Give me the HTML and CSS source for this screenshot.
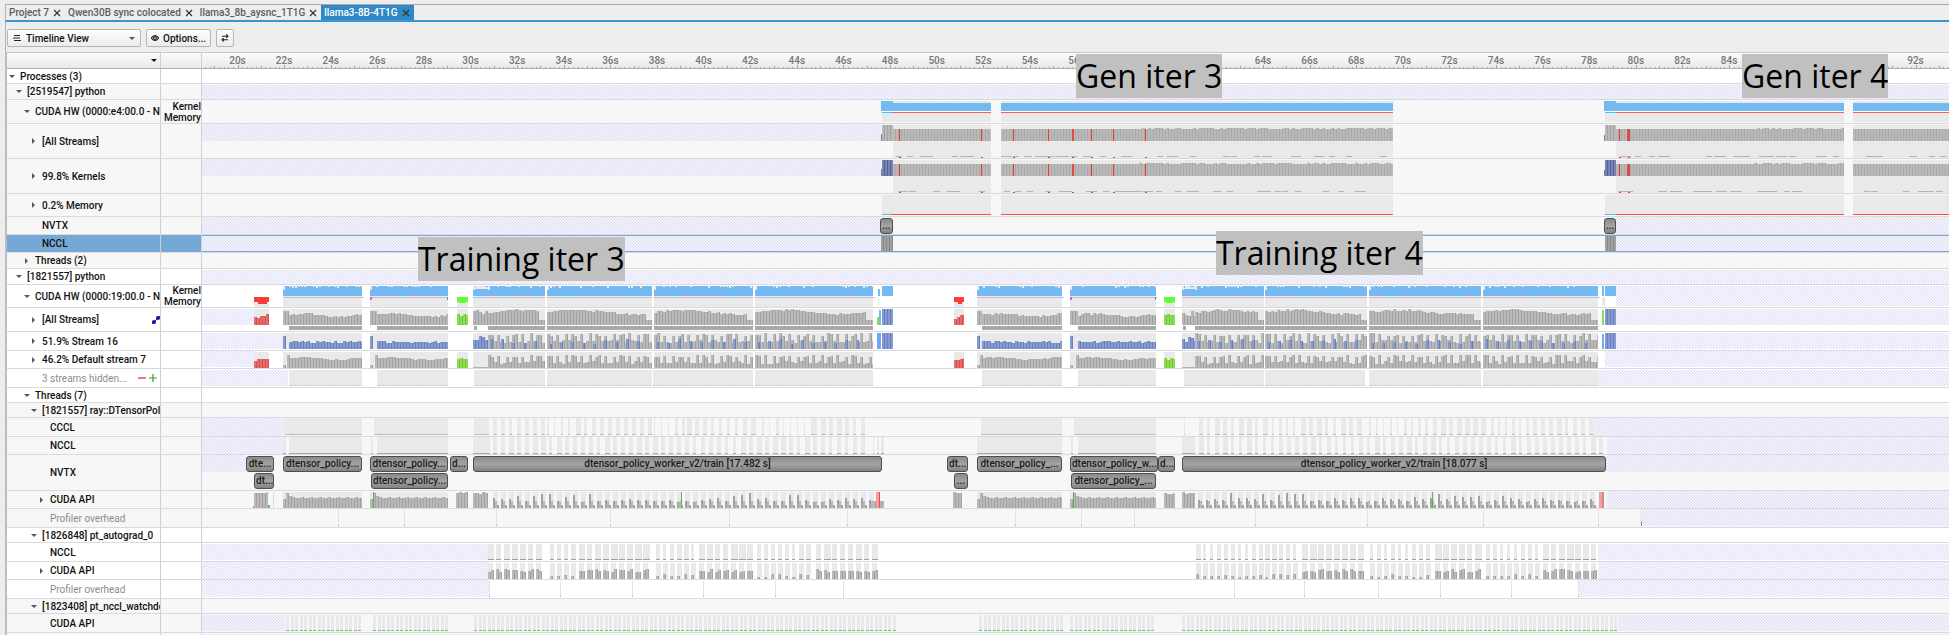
FILE: index.html
```html
<!DOCTYPE html>
<html lang="en">
<head>
<meta charset="utf-8">
<meta name="viewport" content="width=device-width, initial-scale=1">
<title>llama3-8B-4T1G</title>
<link rel="stylesheet" href="styles.css">
</head>
<body>
<svg class="defs" aria-hidden="true">
  <defs>
    <pattern id="hatch" width="3" height="3" patternUnits="userSpaceOnUse">
      <rect width="3" height="3" class="hatch-base"/>
      <rect width="1.5" height="1.5" class="hatch-dot"/>
      <rect x="1.5" y="1.5" width="1.5" height="1.5" class="hatch-dot"/>
    </pattern>
  </defs>
</svg>
<div class="app">
  <nav class="tabs" aria-label="Reports">
    <div class="tab"><a href="#p7">Project 7</a><button class="close" aria-label="Close Project 7"><svg viewBox="0 0 8 8"><path d="M1 1l6 6M7 1l-6 6"/></svg></button></div>
    <div class="tab"><a href="#qwen">Qwen30B sync colocated</a><button class="close" aria-label="Close Qwen30B"><svg viewBox="0 0 8 8"><path d="M1 1l6 6M7 1l-6 6"/></svg></button></div>
    <div class="tab"><a href="#async">llama3_8b_aysnc_1T1G</a><button class="close" aria-label="Close llama3_8b"><svg viewBox="0 0 8 8"><path d="M1 1l6 6M7 1l-6 6"/></svg></button></div>
    <div class="tab tab-active"><a href="#cur" aria-current="page">llama3-8B-4T1G</a><button class="close" aria-label="Close llama3-8B-4T1G"><svg viewBox="0 0 8 8"><path d="M1 1l6 6M7 1l-6 6"/></svg></button></div>
  </nav>
  <div class="toolbar">
    <div class="view-picker">
      <svg class="icon" viewBox="0 0 8 8"><path d="M1 1.5h6M0 4h7M1 6.5h7"/></svg>
      <select aria-label="View"><option>Timeline View</option></select>
      <span class="caret"></span>
    </div>
    <button class="btn"><svg class="icon" viewBox="0 0 8 8"><path d="M0.4 4Q4 -0.8 7.6 4Q4 8.8 0.4 4Z"/><circle cx="4" cy="4" r="1.4"/></svg>Options...</button>
    <button class="btn btn-swap" aria-label="Swap"><svg class="icon" viewBox="0 0 8 8"><path d="M1 2.2h6M5.2 0.5L7 2.2L5.2 3.9M7 5.8H1M2.8 4.1L1 5.8L2.8 7.5"/></svg></button>
  </div>
  <main class="timeline">
    <div class="row head">
      <div class="name"><span class="caret caret-dark"></span></div><div class="sub"></div><div class="lane" id="ruler"></div>
    </div>
    <div class="row h15 white"><div class="name l0"><button class="tog open" aria-label="Toggle"></button><span>Processes (3)</span></div><div class="sub"></div><div class="lane"></div></div>
    <div class="row h16"><div class="name l1"><button class="tog open" aria-label="Toggle"></button><span>[2519547] python</span></div><div class="sub"></div><div class="lane" data-lane="full"></div></div>
    <div class="row h24"><div class="name l2"><button class="tog open" aria-label="Toggle"></button><span>CUDA HW (0000:e4:00.0 - NV</span></div><div class="sub">Kernel<br>Memory</div><div class="lane" data-lane="genHw"></div></div>
    <div class="row h35"><div class="name l3"><button class="tog" aria-label="Toggle"></button><span>[All Streams]</span></div><div class="sub"></div><div class="lane" data-lane="genAll"></div></div>
    <div class="row h35"><div class="name l3"><button class="tog" aria-label="Toggle"></button><span>99.8% Kernels</span></div><div class="sub"></div><div class="lane" data-lane="genKernels"></div></div>
    <div class="row h23"><div class="name l3"><button class="tog" aria-label="Toggle"></button><span>0.2% Memory</span></div><div class="sub"></div><div class="lane" data-lane="genMemory"></div></div>
    <div class="row h18"><div class="name l3 leaf"><span>NVTX</span></div><div class="sub"></div><div class="lane" data-lane="genNvtx"></div></div>
    <div class="row h18 selected"><div class="name l3 leaf"><span>NCCL</span></div><div class="sub"></div><div class="lane" data-lane="genNccl"></div></div>
    <div class="row h16"><div class="name l2"><button class="tog" aria-label="Toggle"></button><span>Threads (2)</span></div><div class="sub"></div><div class="lane"></div></div>
    <div class="row h16 white"><div class="name l1"><button class="tog open" aria-label="Toggle"></button><span>[1821557] python</span></div><div class="sub"></div><div class="lane" data-lane="full"></div></div>
    <div class="row h23 white"><div class="name l2"><button class="tog open" aria-label="Toggle"></button><span>CUDA HW (0000:19:00.0 - NV</span></div><div class="sub">Kernel<br>Memory</div><div class="lane" data-lane="trainHw"></div></div>
    <div class="row h24 white"><div class="name l3"><button class="tog" aria-label="Toggle"></button><span>[All Streams]</span><svg class="link" viewBox="0 0 8 8"><path d="M1.5 6.5L6.5 1.5"/><circle cx="1.8" cy="6.2" r="1.7"/><circle cx="6.2" cy="1.8" r="1.7"/></svg></div><div class="sub"></div><div class="lane" data-lane="trainAll"></div></div>
    <div class="row h19 white"><div class="name l3"><button class="tog" aria-label="Toggle"></button><span>51.9% Stream 16</span></div><div class="sub"></div><div class="lane" data-lane="stream16"></div></div>
    <div class="row h18 white"><div class="name l3"><button class="tog" aria-label="Toggle"></button><span>46.2% Default stream 7</span></div><div class="sub"></div><div class="lane" data-lane="stream7"></div></div>
    <div class="row h19 white"><div class="name l3 leaf muted"><span>3 streams hidden...</span><button class="pm" aria-label="Fewer"><svg viewBox="0 0 8 8"><path class="minus" d="M0 4h8"/></svg></button><button class="pm" aria-label="More"><svg viewBox="0 0 8 8"><path class="plus" d="M0 4h8M4 0v8"/></svg></button></div><div class="sub"></div><div class="lane" data-lane="hidden"></div></div>
    <div class="row h15 white"><div class="name l2"><button class="tog open" aria-label="Toggle"></button><span>Threads (7)</span></div><div class="sub"></div><div class="lane"></div></div>
    <div class="row h15"><div class="name l3"><button class="tog open" aria-label="Toggle"></button><span>[1821557] ray::DTensorPol</span></div><div class="sub"></div><div class="lane"></div></div>
    <div class="row h19"><div class="name l4 leaf"><span>CCCL</span></div><div class="sub"></div><div class="lane" data-lane="cccl"></div></div>
    <div class="row h18"><div class="name l4 leaf"><span>NCCL</span></div><div class="sub"></div><div class="lane" data-lane="nccl"></div></div>
    <div class="row h36"><div class="name l4 leaf"><span>NVTX</span></div><div class="sub"></div><div class="lane" data-lane="nvtx"></div></div>
    <div class="row h18"><div class="name l4"><button class="tog" aria-label="Toggle"></button><span>CUDA API</span></div><div class="sub"></div><div class="lane" data-lane="api"></div></div>
    <div class="row h19"><div class="name l4 leaf muted"><span>Profiler overhead</span></div><div class="sub"></div><div class="lane" data-lane="overhead"></div></div>
    <div class="row h15 white"><div class="name l3"><button class="tog open" aria-label="Toggle"></button><span>[1826848] pt_autograd_0</span></div><div class="sub"></div><div class="lane"></div></div>
    <div class="row h19 white"><div class="name l4 leaf"><span>NCCL</span></div><div class="sub"></div><div class="lane" data-lane="gradNccl"></div></div>
    <div class="row h18 white"><div class="name l4"><button class="tog" aria-label="Toggle"></button><span>CUDA API</span></div><div class="sub"></div><div class="lane" data-lane="gradApi"></div></div>
    <div class="row h19 white"><div class="name l4 leaf muted"><span>Profiler overhead</span></div><div class="sub"></div><div class="lane" data-lane="gradOverhead"></div></div>
    <div class="row h15"><div class="name l3"><button class="tog open" aria-label="Toggle"></button><span>[1823408] pt_nccl_watchdog</span></div><div class="sub"></div><div class="lane"></div></div>
    <div class="row h19"><div class="name l4 leaf"><span>CUDA API</span></div><div class="sub"></div><div class="lane" data-lane="watchApi"></div></div>
    <div class="row rest"><div class="name"></div><div class="sub"></div><div class="lane" data-lane="full"></div></div>
    <div class="notes" id="notes"></div>
  </main>
</div>
<script src="timeline.js"></script>
</body>
</html>
```

FILE: styles.css
```css
* { box-sizing: border-box; }
body {
  margin: 0;
  min-height: 100vh;
  background: #ededed;
  color: #111;
  font: 500 10px/11px Roboto, "Liberation Sans", sans-serif;
}
button, select { font: inherit; color: inherit; }
.defs { position: absolute; width: 0; height: 0; }
.hatch-base { fill: #ffffff; fill-opacity: 0.4; }
.hatch-dot { fill: #dcdcf8; shape-rendering: geometricPrecision; }

.app {
  display: flex;
  flex-direction: column;
  min-height: 100vh;
  padding: 4px 0 0 5px;
  overflow: hidden;
}

.tabs {
  display: flex;
  height: 18px;
  border-top: 1px solid #a8a8a8;
  border-left: 1px solid #b4b4b4;
  border-bottom: 2px solid #3a96d2;
}
.tab {
  display: flex;
  align-items: center;
  gap: 4px;
  padding: 0 4px 0 3px;
  color: #5c5c5c;
}
.tab-active { background: #2f89c5; color: #fff; }
.tab a { color: inherit; text-decoration: none; }
.close { width: 8px; height: 8px; padding: 0; border: 0; background: none; }
.close svg { display: block; width: 8px; height: 8px; fill: none; stroke: #333; stroke-width: 1.2; }

.toolbar {
  display: flex;
  gap: 5px;
  height: 30px;
  padding: 7px 1px 5px;
  border-left: 1px solid #b4b4b4;
}
.view-picker, .btn {
  display: flex;
  align-items: center;
  gap: 5px;
  border: 1px solid #b6b6b6;
  border-radius: 2px;
  background: linear-gradient(#fdfdfd, #ececec);
}
.view-picker { width: 134px; padding: 0 5px; }
.view-picker select {
  flex: 1;
  padding: 0;
  border: 0;
  background: none;
  appearance: none;
}
.btn { gap: 4px; padding: 0 4px; }
.btn-swap { width: 18px; justify-content: center; }
.icon { width: 8px; height: 8px; flex: none; fill: none; stroke: #222; stroke-width: 1.1; }
.caret {
  width: 0;
  border: 3px solid transparent;
  border-top-color: #555;
  border-bottom: 0;
}
.caret-dark { border-top-color: #111; margin: 0 3px 0 auto; }

.timeline {
  position: relative;
  flex: 1;
  display: flex;
  flex-direction: column;
  border-left: 2px solid #bcbcbc;
}
.row {
  display: flex;
  flex: none;
  background: #f7f7f7;
  border-bottom: 1px solid #dadada;
}
.head {
  height: 17px;
  background: linear-gradient(#fbfbfb, #e9e9e9);
  border-top: 1px solid #c8c8c8;
  border-bottom: 1px solid #b0b0b0;
}
.white { background: #fff; }
.h15 { height: 15px; }
.h16 { height: 16px; }
.h18 { height: 18px; }
.h19 { height: 19px; }
.h23 { height: 23px; }
.h24 { height: 24px; }
.h35 { height: 35px; }
.h36 { height: 36px; }
.rest { flex: 1 0 2px; border-bottom: 0; }

.name {
  display: flex;
  align-items: center;
  flex: none;
  width: 154px;
  border-right: 1px solid #d0d0d0;
  overflow: hidden;
  white-space: nowrap;
}
.name span { flex: none; }
.l0 { padding-left: 1px; }
.l1 { padding-left: 8px; }
.l2 { padding-left: 16px; }
.l3 { padding-left: 23px; }
.l4 { padding-left: 31px; }
.leaf::before { content: ""; flex: none; width: 12px; }
.muted { color: #8c8c8c; font-weight: 400; }
.tog {
  display: flex;
  align-items: center;
  justify-content: center;
  flex: none;
  width: 7px;
  height: 9px;
  margin-right: 5px;
  padding: 0;
  border: 0;
  background: none;
}
.tog::before {
  content: "";
  border: 3px solid transparent;
  border-left-color: #555;
  border-right: 0;
}
.tog.open::before {
  border: 3px solid transparent;
  border-top-color: #555;
  border-bottom: 0;
}
.link {
  width: 8px;
  height: 8px;
  margin-left: auto;
  fill: #1c1c96;
  stroke: #1c1c96;
  stroke-width: 1;
}
.pm { width: 8px; height: 8px; padding: 0; border: 0; margin-right: 3px; background: none; }
.name span + .pm { margin-left: auto; }
.pm svg { display: block; width: 8px; height: 8px; fill: none; stroke-width: 1.2; }
.minus { stroke: #e02020; }
.plus { stroke: #2ca02c; }

.sub {
  flex: none;
  display: flex;
  align-items: center;
  justify-content: flex-end;
  width: 41px;
  border-right: 1px solid #d0d0d0;
  text-align: right;
}
.selected .name, .selected .sub { background: #74a9d5; }
.selected .lane { box-shadow: inset 0 1px #74a9d5, inset 0 -1px #74a9d5; }

.lane {
  position: relative;
  flex: 1;
  min-width: 0;
  overflow: hidden;
}
.lane svg { display: block; width: 100%; height: 100%; shape-rendering: crispEdges; }

.tick {
  position: absolute;
  top: 2px;
  width: 40px;
  margin-left: -20px;
  color: #777;
  text-align: center;
}

.range {
  position: absolute;
  top: 1px;
  height: 16px;
  padding: 0 1px;
  border: 1px solid #4e4e4e;
  border-radius: 3px;
  background: linear-gradient(#8a8a8a, #a4a4a4 50%, #828282);
  color: #1a1a1a;
  line-height: 14px;
  text-align: center;
  white-space: nowrap;
  overflow: hidden;
}
.range-child { top: 18px; }

.notes { position: absolute; inset: 0 0 0 195px; pointer-events: none; }
.note {
  position: absolute;
  background: #c0c0c0;
  color: #000;
  font: 500 32px/44px "Open Sans", "Noto Sans", sans-serif;
  white-space: nowrap;
}
```

FILE: timeline.js
```js
// Horizontal coordinates run from START to END and scale with the lane width.
const START = 202, END = 1949, SPAN = END - START;
const pct = (v) => (v / SPAN * 100).toFixed(3) + '%';
const LIGHT = '#e9e9e9', GREY = '#b9b9b9', EDGE = '#a2a2a2';
const BLUE = '#8599d3', BLUE_EDGE = '#6b7fb8', SKY = '#74baf2';
const RED = '#fd3b3b', RED_BAR = '#ea6a6a', GREEN = '#62fb34', GREEN_BAR = '#8ce04c';

let seed = 7;
const rnd = () => (seed = (seed * 1103515245 + 12345) % 2147483648) / 2147483648;

const r = (x, y, x2, h, fill) => `<rect x="${x}" y="${y}" width="${x2 - x}" height="${h}" fill="${fill}"/>`;
const hatch = (x, x2, y, h) => r(x, y, x2, h, 'url(#hatch)');

// Histogram columns standing on `base`, 3 units wide each with a darker edge.
function bars(x, x2, base, height, fill = GREY, edge = EDGE) {
  let out = '';
  for (let i = 0; x < x2; x += 3, i++) {
    const h = Math.max(1, Math.round(typeof height === 'function' ? height(i, x) : height));
    out += r(x, base - h, Math.min(x + 2, x2), h, fill);
    if (x + 2 < x2) out += r(x + 2, base - h, Math.min(x + 3, x2), h, edge);
  }
  return out;
}

// Light columns with a thin foot line.
function stripes(x, x2, pitch, width, y, h, foot) {
  let out = '';
  for (; x < x2; x += pitch) {
    const w = Math.max(1, width + Math.round(rnd() * 2 - 1));
    out += r(x, y, x + w, h, LIGHT) + r(x, y + h - 1, x + w, 1, foot);
  }
  return out;
}

const A = [[283, 362, 289], [977, 1062, 982]];
const B = [[370, 448, 377], [1070, 1156, 1078]];
const C = [[473, 488], [1182, 1195]];
const D = [[488, 545], [547, 652], [654, 753], [755, 873], [1195, 1264], [1265, 1367], [1369, 1481], [1483, 1598]];
const REDS = [[254, 269], [954, 964]];
const GREENS = [[457, 468], [1164, 1175]];
const BOXES = [...A, ...B, ...C, ...D];
const map = (list, fn) => list.map(fn).join('');

const GEN = [[893, 991], [1001, 1393], [1616, 1844], [1853, 1949]];
const GEN_RED = [899, 981, 1013, 1048, 1072, 1091, 1113, 1145, 1619, 1628];

function genBars(first, edge) {
  let s = hatch(202, 881, 0, 17) + r(881, 10, 883, 7, BLUE_EDGE) + r(1604, 11, 1605, 6, BLUE_EDGE);
  s += map(GEN, ([a, b]) => r(a, 1, b, 33, LIGHT)
    + bars(a, b, 17, (i) => 11.6 + rnd() * 0.7 + (i > 45 ? 0.6 : 0), GREY, '#a9a9a9')
    + map(Array.from({ length: Math.floor((b - a) / 9) }), () => {
      const x = Math.round(a + rnd() * (b - a - 8));
      return r(x, 32, x + 6, 1, '#b4b4b4');
    }));
  s += bars(882, 893, 17, 16, first, edge) + bars(1605, 1616, 17, 16, first, edge);
  s += map(GEN_RED, (x) => r(x, 5, x + 1, 12, '#f03a30') + r(x, 33, x + 2, 1, '#f03a30'));
  s += r(1072, 5, 1074, 12, '#e04a40') + r(1627, 5, 1630, 12, '#e04a40');
  return s;
}

const wave = (i) => 12 + 2 * Math.sin(i / 6) + rnd() * 2;
const comb = (i, lo, hi) => ((i * 3) % 8 < 4 ? hi : lo) + rnd() * 3 - 1;

const LANES = {
  full: (h) => hatch(START, END, 1, h),
  genHw: () => map([[882, 991], [1001, 1393], [1605, 1844], [1853, 1949]], ([a, b]) =>
      r(a, 1, b, 21, LIGHT) + r(a, 3, b, 8, SKY) + r(a, 11, b, 1, '#fff') + r(a, 12, b, 1, '#fb6060'))
    + r(881, 1, 893, 10, SKY) + r(1604, 1, 1616, 10, SKY) + r(882, 12, 892, 1, '#3cc8f4') + r(1605, 12, 1616, 1, '#3cc8f4'),
  genAll: () => genBars(GREY, EDGE),
  genKernels: () => genBars('#7684b4', '#56638e'),
  genMemory: () => map([[882, 991], [1001, 1393], [1605, 1844], [1853, 1949]], ([a, b]) =>
      r(a, 1, b, 20, LIGHT) + r(a, 20, b, 1, '#fb4a4a'))
    + r(882, 20, 891, 1, '#3cc8f4') + r(1605, 20, 1616, 1, '#3cc8f4'),
  genNvtx: () => hatch(202, 880, 0, 17) + hatch(1616, END, 0, 17),
  genNccl: () => hatch(202, 881, 1, 15) + hatch(1616, END, 1, 15)
    + bars(881, 893, 16, 15, '#a0a0a0', '#8a8a8a') + bars(1605, 1616, 16, 15, '#a0a0a0', '#8a8a8a'),
  trainHw: () => {
    let s = map(BOXES, ([a, b]) => r(a, 1, b, 21, LIGHT));
    s += map(BOXES, ([a, b]) => {
      let t = r(a, 1, b, 10, SKY);
      for (let x = a; x < b; x += 3) {
        if (rnd() < 0.35) t += r(x, 1, x + 2, rnd() < 0.7 ? 1 : 2, LIGHT);
        t += r(x, 12, x + 3, 1, rnd() < 0.5 ? '#f6a9bd' : rnd() < 0.5 ? '#8fd3ea' : '#d3b0ee');
      }
      return t + r(a, 1, a + 2, 4, LIGHT);
    });
    s += map(C, ([a, b]) => bars(a, b, 4, () => 1 + rnd() * 3, LIGHT, LIGHT));
    s += map(REDS, ([a, b]) => r(a, 12, b, 10, LIGHT) + r(a, 12, b, 5, RED) + r(a + 4, 17, b - 2, 2, RED));
    s += map(GREENS, ([a, b]) => r(a, 12, b, 10, LIGHT) + r(a, 12, b, 5, GREEN) + r(a + 2, 17, b - 2, 1, GREEN));
    s += map([370, 1070], (x) => r(x, 12, x + 2, 3, '#d05cf0')) + map([447, 1155], (x) => r(x, 12, x + 1, 3, '#17b59a'));
    s += r(878, 4, 880, 7, SKY) + r(882, 1, 893, 10, SKY) + r(878, 12, 879, 8, '#d8f2c8');
    s += r(1602, 1, 1604, 10, SKY) + r(1605, 1, 1616, 10, SKY) + r(1602, 12, 1605, 9, LIGHT);
    return s + hatch(1616, END, 1, 20);
  },
  trainAll: () => {
    let s = hatch(202, 254, 1, 16) + hatch(1616, END, 1, 16);
    s += map([...BOXES, ...REDS, ...GREENS], ([a, b]) => r(a, 1, b, 16, LIGHT));
    s += map([...A, ...B], ([a, b, m]) => bars(a, m, 17, 14) + bars(m, b, 17, (i) => 9 + 1.5 * Math.sin(i / 3.5) + rnd() * 2));
    s += map(C, ([a, b]) => bars(a, b, 17, () => 9 + rnd() * 6));
    s += map(D, ([a, b]) => bars(a, b, 17, (i) => (b - a - i * 3 < 8 ? 5 : wave(i))));
    s += map(REDS, ([a, b]) => bars(a, b, 17, (i) => 6 + i * 0.8 + rnd() * 2, RED_BAR, '#cf5252'));
    s += map(GREENS, ([a, b]) => bars(a, b, 17, () => 8 + rnd() * 3, GREEN_BAR, '#74c03c'));
    s += r(877, 9, 879, 8, GREEN_BAR) + r(1602, 2, 1604, 15, GREEN_BAR);
    s += bars(879, 881, 17, 15, SKY) + bars(882, 893, 17, 16, BLUE, BLUE_EDGE) + bars(1605, 1616, 17, 16, BLUE, BLUE_EDGE);
    s += map([...A, ...B], ([, b, m]) => r(m, 18, b, 4, '#a9a9a9')) + map(D, ([a, b]) => r(a, 18, b, 4, '#a9a9a9'));
    return s + map(C, ([a]) => r(a + 1, 18, a + 4, 4, '#a9a9a9'));
  },
  stream16: () => {
    let s = hatch(202, 283, 1, 16) + hatch(1616, END, 1, 16);
    s += map(BOXES, ([a, b]) => r(a, 1, b, 16, LIGHT));
    s += map([...A, ...B], ([a, b, m]) => bars(a, a + 3, 17, 13, BLUE, BLUE_EDGE) + bars(m, b, 17, () => 6 + rnd() * 2.5, BLUE, BLUE_EDGE));
    s += map(C, ([a, b]) => bars(a, b, 17, () => 5 + rnd() * 9, BLUE, BLUE_EDGE));
    s += map(D, ([a, b]) => bars(a, b, 17, (i) => comb(i, 7, 14)) + map(
      Array.from({ length: Math.floor((b - a) / 11) }), (_, i) => bars(a + i * 11 + 2, a + i * 11 + 5, 17, () => 5 + rnd() * 5, BLUE, BLUE_EDGE)));
    return s + r(877, 1, 881, 16, '#6fa8f8') + r(1602, 2, 1604, 15, '#6fa8f8')
      + bars(882, 893, 17, 16, BLUE, BLUE_EDGE) + bars(1605, 1616, 17, 16, BLUE, BLUE_EDGE);
  },
  stream7: () => {
    let s = hatch(202, 254, 0, 16) + hatch(1605, END, 0, 16);
    s += map([...BOXES, ...REDS, ...GREENS], ([a, b]) => r(a, 1, b, 16, LIGHT));
    s += map([...A, ...B], ([a, b, m]) => bars(a, a + 3, 17, 3) + bars(m - 2, b, 17, (i) => (i ? 9 + 1.2 * Math.sin(i / 3.5) + rnd() : 13)));
    s += map(C, ([a, b]) => bars(a, b, 17, 1));
    s += map(D, ([a, b]) => bars(a, b, 17, (i) => comb(i, 5, 11.5)));
    s += map(REDS, ([a, b]) => bars(a, b, 17, (i) => 6 + i * 0.8 + rnd() * 2, RED_BAR, '#cf5252'));
    return s + map(GREENS, ([a, b]) => bars(a, b, 17, () => 8 + rnd() * 3, GREEN_BAR, '#74c03c'));
  },
  hidden: () => hatch(202, 288, 1, 16) + hatch(1598, END, 1, 16)
    + map([[289, 362], [377, 448], [474, 545], [547, 652], [653, 753], [755, 873], [982, 1062], [1078, 1156], [1184, 1264], [1265, 1365], [1369, 1481], [1483, 1598]],
      ([a, b]) => r(a, 1, b, 16, LIGHT) + `<path d="M${a} 16.5H${b}" stroke="#cfc4b8" stroke-dasharray="2 1"/>`),
  cccl: () => hatch(202, 285, 0, 18) + hatch(1592, END, 0, 18)
    + map([[285, 362], [374, 448], [474, 489], [981, 1062], [1074, 1156], [1184, 1185]], ([a, b]) => r(a, 0, b, 17, LIGHT) + r(a, 16, b, 1, '#bcbcbc'))
    + map([[493, 545, 4], [547, 575, 2], [576, 652, 4], [654, 685, 2], [687, 753, 4], [755, 812, 2], [813, 867, 4],
      [1199, 1264, 4], [1265, 1300, 2], [1301, 1365, 4], [1369, 1430, 2], [1433, 1482, 5], [1484, 1530, 2], [1533, 1590, 4]],
      ([a, b, w]) => stripes(a, b, w > 3 ? 8 : 7, w, 0, 17, '#bcbcbc')),
  nccl: () => hatch(202, 283, 0, 17) + hatch(1607, END, 0, 17)
    + map([[283, 286], [289, 362], [371, 373], [377, 448], [473, 490], [873, 874], [877, 879], [881, 884], [977, 1062], [1071, 1073], [1078, 1156], [1182, 1195]],
      ([a, b]) => r(a, 0, b, 17, LIGHT) + r(a, 16, b, 1, '#a6a6a6'))
    + map([[493, 867], [1199, 1604]], ([a, b]) => stripes(a, b, 8, 4, 0, 17, '#a6a6a6')),
  nvtx: () => hatch(202, 246, 0, 17) + hatch(1606, END, 0, 17),
  api: () => {
    let s = hatch(1607, END, 0, 17);
    s += map([...A, ...B], ([a, b]) => r(a, 1, b, 16, LIGHT) + bars(a, b, 17, (i) => [9, 15, 12][i] || 10 + (i % 3 ? 0 : 1)));
    s += map([[254, 268], [456, 468], [473, 488], [953, 962], [1164, 1175], [1182, 1195]], ([a, b]) => bars(a, b, 17, () => 14 + rnd() * 2));
    s += map([[493, 870], [1198, 1596]], ([a, b]) => {
      let t = '';
      for (let x = a, i = 0; x < b; x += 8, i++) {
        const big = Math.sin(i / 4.2) > 0 ? 9 : 4;
        t += r(x, 1, x + 5, 16, LIGHT) + r(x, 17 - 6 - Math.round(rnd() * big), x + 2, 6 + big, EDGE)
          + r(x + 2, 10, x + 4, 7, GREY) + r(x + 4, 14, x + 6, 3, EDGE);
      }
      return t;
    });
    s += r(253, 15, 254, 2, '#f07070') + r(268, 14, 270, 3, '#58c850') + r(273, 1, 274, 16, '#e6d6d6');
    s += map([373, 681, 1073, 1432], (x) => r(x, 1, x + 1, 16, '#58b850'));
    s += bars(873, 884, 17, 7);
    return s + r(876, 1, 879, 16, '#f0a0a0') + r(879, 1, 880, 16, '#e05050') + r(1599, 1, 1602, 16, '#f0a0a0') + r(1602, 1, 1604, 16, '#d08888');
  },
  overhead: () => map([338, 404, 496, 610, 729, 847, 1015, 1081, 1134, 1255, 1367, 1483, 1598],
      (x) => r(x, 1, x + 1, 16, '#e2e2e2') + r(x, 16, x + 1, 1, '#aaa'))
    + hatch(1640, END, 0, 17) + r(1641, 12, 1642, 5, '#888'),
  gradNccl: () => hatch(202, 488, 1, 16) + hatch(1598, END, 1, 16)
    + map([[488, 548, 6], [550, 578, 4], [579, 654, 6], [656, 697, 4], [699, 755, 6], [757, 814, 4], [816, 877, 6],
      [1196, 1264, 4], [1265, 1300, 4], [1302, 1368, 6], [1370, 1433, 4], [1435, 1483, 6], [1486, 1542, 4], [1543, 1601, 6]],
      ([a, b, w]) => stripes(a, b - 4, w > 4 ? 8 : 7, w, 1, 16, '#9e9e9e')),
  gradApi: () => hatch(202, 488, 0, 17) + hatch(1598, END, 0, 17)
    + map([[488, 548, 9], [550, 578, 4], [579, 654, 9], [656, 697, 4], [699, 755, 9], [757, 814, 4], [816, 877, 9],
      [1196, 1264, 4], [1265, 1300, 4], [1302, 1368, 9], [1370, 1433, 4], [1435, 1483, 9], [1486, 1542, 4], [1543, 1601, 9]],
      ([a, b, h]) => {
        let t = '';
        for (let x = a; x < b - 4; x += h > 4 ? 8 : 7) {
          t += r(x, 1, x + 5, 16, LIGHT) + bars(x, x + (h > 4 ? 6 : 3), 17, () => h - 2 + rnd() * 3);
        }
        return t;
      }),
  gradOverhead: () => hatch(202, 489, 0, 17) + hatch(1578, END, 0, 17)
    + map([489, 560, 632, 703, 775, 843, 1234, 1304, 1378, 1440, 1511, 1578], (x) => r(x, 1, x + 1, 16, '#e2e2e2') + r(x, 16, x + 1, 1, '#aaa')),
  watchApi: () => hatch(202, 285, 1, 16) + hatch(1618, END, 1, 16)
    + map([[286, 362], [373, 448], [474, 895], [979, 1062], [1070, 1156], [1182, 1616]], ([a, b]) => {
      let t = '';
      for (let x = a, i = 0; x < b; x += i++ % 2 ? 4 : 5) t += r(x, 1, x + 3, 15, LIGHT) + r(x, 16, x + 3, 1, '#6ecb5e');
      return t;
    }),
};

const RANGES = {
  genNvtx: [[880, 893, '...'], [1604, 1616, '...']],
  nvtx: [
    [246, 274, 'dte...'], [283, 362, 'dtensor_policy...'], [370, 448, 'dtensor_policy...'], [450, 468, 'd...'],
    [473, 882, 'dtensor_policy_worker_v2/train [17.482 s]'], [947, 968, 'dt...'], [977, 1062, 'dtensor_policy_...'],
    [1070, 1158, 'dtensor_policy_w...'], [1158, 1175, 'd...'], [1182, 1606, 'dtensor_policy_worker_v2/train [18.077 s]'],
    [254, 274, 'dt...', 1], [371, 448, 'dtensor_policy...', 1], [954, 968, '...', 1], [1071, 1156, 'dtensor_policy_...', 1],
  ],
};

const svg = (h, body) => `<svg viewBox="${START} 0 ${SPAN} ${h}" preserveAspectRatio="none" aria-hidden="true">${body}</svg>`;

document.querySelectorAll('[data-lane]').forEach((lane) => {
  const key = lane.dataset.lane, h = lane.clientHeight;
  lane.innerHTML = svg(h, LANES[key](h)) + map(RANGES[key] || [], ([a, b, text, child]) =>
    `<span class="range${child ? ' range-child' : ''}" style="left:${pct(a - START)};width:${pct(b - a)}">${text}</span>`);
});

// Ruler: a label every two seconds, except where a note lies over it; five minor ticks per second.
const ruler = document.getElementById('ruler');
const at = (s) => 237.5 + (s - 20) * 23.306;
const covered = [58, 60, 62, 86, 88, 90];
let ticks = '', labels = '';
for (let i = 93; i <= 467; i++) {
  const x = Math.round(at(i / 5)), h = i % 10 === 0 ? 3 : i % 5 === 0 ? 2 : 1;
  ticks += r(x, 15 - h, x + 1, h, '#a0a0a0');
}
for (let s = 20; s <= 92; s += 2) {
  if (!covered.includes(s)) labels += `<span class="tick" style="left:${pct(at(s) - START)}">${s}s</span>`;
}
ruler.innerHTML = svg(15, ticks) + labels;

document.getElementById('notes').innerHTML = map([
  [1076, 2, 'Gen iter 3'], [1742, 2, 'Gen iter 4'], [418, 185, 'Training iter 3'], [1216, 179, 'Training iter 4'],
], ([x, y, text]) => `<div class="note" style="left:${pct(x - START)};top:${y}px">${text}</div>`);
```
